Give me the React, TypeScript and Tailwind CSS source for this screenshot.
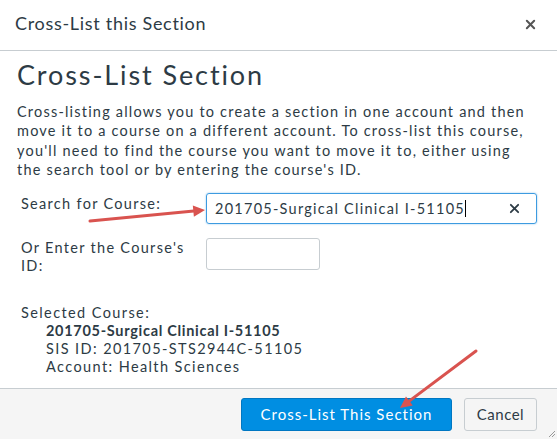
import React from "react";

const font = { fontFamily: "Lato, 'Open Sans', sans-serif" };

function Arrow({ x1, y1, x2, y2 }: { x1: number; y1: number; x2: number; y2: number }) {
  const a = Math.atan2(y2 - y1, x2 - x1);
  const L = 13;
  const w = 0.45;
  const p1 = `${x2 - L * Math.cos(a - w)},${y2 - L * Math.sin(a - w)}`;
  const p2 = `${x2 - L * Math.cos(a + w)},${y2 - L * Math.sin(a + w)}`;
  return (
    <g>
      <line x1={x1} y1={y1} x2={x2 - 6 * Math.cos(a)} y2={y2 - 6 * Math.sin(a)} stroke="#d9534f" strokeWidth="3" strokeLinecap="round" />
      <polygon points={`${x2},${y2} ${p1} ${p2}`} fill="#d9534f" />
    </g>
  );
}

export default function App() {
  return (
    <div className="relative w-[557px] h-[439px] bg-white text-[#2d3b45] overflow-hidden flex flex-col" style={font}>
      {/* Header */}
      <div className="h-[51px] shrink-0 flex items-center justify-between pl-[15px] pr-[21px] pb-[5px] border-b border-[#c7cdd1]">
        <h1 className="text-[18px] leading-none tracking-[0.7px]">Cross-List this Section</h1>
        <svg width="11" height="11" viewBox="0 0 12 12" className="mt-[3px]">
          <path d="M2 2l8 8M10 2l-8 8" stroke="#555" strokeWidth="2.2" strokeLinecap="round" />
        </svg>
      </div>

      {/* Body */}
      <div className="flex-1 px-[17px] pt-[9px]">
        <h2 className="text-[27px] leading-[30px] tracking-[1.9px] mb-[12px]">Cross-List Section</h2>
        <p className="text-[14.5px] leading-[19.3px] tracking-[1.2px]">
          Cross-listing allows you to create a section in one account and then move it to a course on a different account. To cross-list this course, you'll need to find the course you want to move it to, either using the search tool or by entering the course's ID.
        </p>

        <div className="mt-[14px] grid grid-cols-[189px_1fr] gap-y-[14px] pr-[3px] text-[14.5px] tracking-[1.3px]">
          <div className="pl-[4px] pt-[1px] leading-[19px]">Search for Course:</div>
          <div className="h-[31px] border border-[#3d9be0] rounded-[3px] flex items-center justify-between pl-[8px] pr-[16px] shadow-[0_0_2px_#8cc3ec]">
            <span className="text-[14.5px] tracking-[1.25px] flex items-center">
              201705-Surgical Clinical I-51105
              <span className="inline-block w-px h-[17px] bg-black" />
            </span>
            <svg width="11" height="11" viewBox="0 0 12 12">
              <path d="M2 2l8 8M10 2l-8 8" stroke="#2d3b45" strokeWidth="2" strokeLinecap="round" />
            </svg>
          </div>

          <div className="pl-[4px] leading-[18px] pt-px">
            Or Enter the Course's
            <br />
            ID:
          </div>
          <div className="w-[114px] h-[32px] border border-[#c7cdd1] rounded-[3px]" />
        </div>

        <div className="mt-[29px] pl-[4px] text-[14.5px] leading-[18px] tracking-[1.4px]">
          <div>Selected Course:</div>
          <div className="pl-[25px]">
            <div className="font-bold tracking-[0.7px]">201705-Surgical Clinical I-51105</div>
            <div>SIS ID: 201705-STS2944C-51105</div>
            <div>Account: Health Sciences</div>
          </div>
        </div>
      </div>

      {/* Footer */}
      <div className="h-[51px] shrink-0 bg-[#f5f5f5] border-t border-[#c7cdd1] flex items-center justify-end gap-[12px] pr-[20px]">
        <button className="w-[211px] h-[33px] bg-[#008ee2] border border-[#0077c2] rounded-[3px] text-white text-[15px] tracking-[1px]">
          Cross-List This Section
        </button>
        <button className="w-[73px] h-[33px] bg-[#f5f5f5] border border-[#c7cdd1] rounded-[3px] text-[#2d3b45] text-[15px] tracking-[0.5px]">
          Cancel
        </button>
      </div>

      {/* resize grip */}
      <svg width="10" height="10" viewBox="0 0 10 10" className="absolute right-[1px] bottom-[1px]">
        <path d="M9 3L3 9M9 6L6 9" stroke="#999" strokeWidth="1" />
      </svg>

      {/* annotation arrows */}
      <svg width="557" height="439" className="absolute inset-0 pointer-events-none">
        <Arrow x1={90} y1={221} x2={205} y2={210} />
        <Arrow x1={476} y1={351} x2={400} y2={408} />
      </svg>
    </div>
  );
}
